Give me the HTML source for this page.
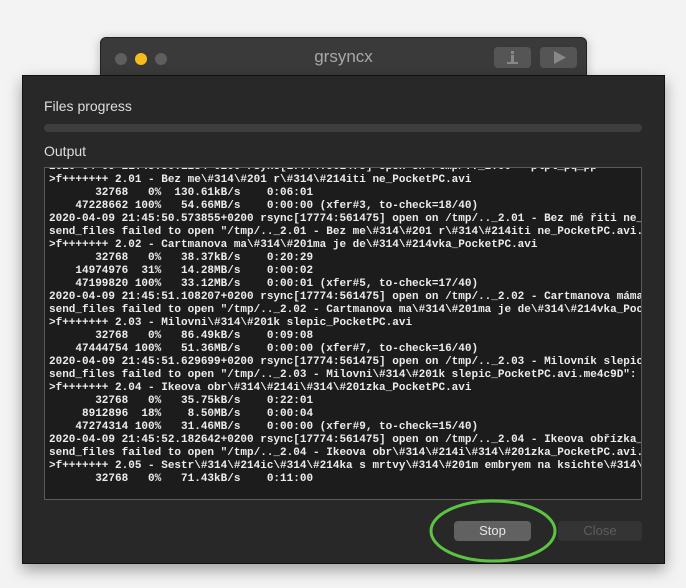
<!DOCTYPE html>
<html><head><meta charset="utf-8"><style>
body{margin:0;width:686px;height:588px;background:#f3f3f3;position:relative;overflow:hidden;font-family:"Liberation Sans",sans-serif}
.win{position:absolute;left:100px;top:37px;width:485px;height:60px;background:#3a3a3a;border:1px solid #222;border-radius:6px;box-shadow:0 2px 10px rgba(0,0,0,.25)}
.dot{position:absolute;top:15px;width:12px;height:12px;border-radius:50%;background:#5e5e5e}
.title{position:absolute;left:0;right:0;top:9px;text-align:center;color:#a8a8a8;font-size:17px}
.tb{position:absolute;top:9px;width:37px;height:21px;background:#555;border-radius:4px}
.sheet{position:absolute;left:22px;top:75px;width:641px;height:487px;background:#282828;border:1px solid #111;box-shadow:0 6px 14px rgba(0,0,0,.35)}
.lbl{position:absolute;left:21px;color:#dedede;font-size:14px}
.bar{position:absolute;left:21px;top:48px;width:598px;height:8px;background:#3e3e3e;border-radius:4px}
.out{position:absolute;left:21px;top:91px;width:596px;height:331px;background:#1c1c1c;border:1px solid #5a5a5a;overflow:hidden}
pre{margin:0;position:absolute;left:4px;top:-7px;font-family:"Liberation Mono",monospace;font-size:11px;font-weight:bold;line-height:13px;color:#ececec;white-space:pre}
.btn{position:absolute;top:445px;height:20px;border-radius:4px;text-align:center;font-size:13px;line-height:20px}
</style></head><body>
<div class="win">
<div class="dot" style="left:14px"></div><div class="dot" style="left:34px;background:#f5bd1c"></div><div class="dot" style="left:54px"></div>
<div class="title">grsyncx</div>
<div class="tb" style="left:393px"><svg width="37" height="21"><rect x="17" y="4" width="3" height="3" fill="#888"/><rect x="17" y="8" width="3" height="7" fill="#888"/><rect x="13" y="15" width="11" height="2" fill="#888"/></svg></div>
<div class="tb" style="left:439px"><svg width="37" height="21"><path d="M14 4 L26 10.5 L14 17Z" fill="#888"/></svg></div>
</div>
<div class="sheet">
<div class="lbl" style="top:22px">Files progress</div>
<div class="bar"></div>
<div class="lbl" style="top:67px">Output</div>
<div class="out"><pre>2020-04-09 21:45:50.1234+0200 rsync[17774:561475] open on /tmp/.._2.00 - plpl_pq_pp
&gt;f+++++++ 2.01 - Bez me\#314\#201 r\#314\#214iti ne_PocketPC.avi
       32768   0%  130.61kB/s    0:06:01
    47228662 100%   54.66MB/s    0:00:00 (xfer#3, to-check=18/40)
2020-04-09 21:45:50.573855+0200 rsync[17774:561475] open on /tmp/.._2.01 - Bez mé řiti ne_
send_files failed to open "/tmp/.._2.01 - Bez me\#314\#201 r\#314\#214iti ne_PocketPC.avi.
&gt;f+++++++ 2.02 - Cartmanova ma\#314\#201ma je de\#314\#214vka_PocketPC.avi
       32768   0%   38.37kB/s    0:20:29
    14974976  31%   14.28MB/s    0:00:02
    47199820 100%   33.12MB/s    0:00:01 (xfer#5, to-check=17/40)
2020-04-09 21:45:51.108207+0200 rsync[17774:561475] open on /tmp/.._2.02 - Cartmanova máma
send_files failed to open "/tmp/.._2.02 - Cartmanova ma\#314\#201ma je de\#314\#214vka_Poc
&gt;f+++++++ 2.03 - Milovni\#314\#201k slepic_PocketPC.avi
       32768   0%   86.49kB/s    0:09:08
    47444754 100%   51.36MB/s    0:00:00 (xfer#7, to-check=16/40)
2020-04-09 21:45:51.629699+0200 rsync[17774:561475] open on /tmp/.._2.03 - Milovník slepic
send_files failed to open "/tmp/.._2.03 - Milovni\#314\#201k slepic_PocketPC.avi.me4c9D":
&gt;f+++++++ 2.04 - Ikeova obr\#314\#214i\#314\#201zka_PocketPC.avi
       32768   0%   35.75kB/s    0:22:01
     8912896  18%    8.50MB/s    0:00:04
    47274314 100%   31.46MB/s    0:00:00 (xfer#9, to-check=15/40)
2020-04-09 21:45:52.182642+0200 rsync[17774:561475] open on /tmp/.._2.04 - Ikeova obřízka_
send_files failed to open "/tmp/.._2.04 - Ikeova obr\#314\#214i\#314\#201zka_PocketPC.avi.
&gt;f+++++++ 2.05 - Sestr\#314\#214ic\#314\#214ka s mrtvy\#314\#201m embryem na ksichte\#314\
       32768   0%   71.43kB/s    0:11:00</pre></div>
<div class="btn" style="left:431px;width:77px;background:#616161;color:#e6e6e6">Stop</div>
<div class="btn" style="left:535px;width:84px;background:#343434;color:#5e5e5e">Close</div>
</div>
<svg style="position:absolute;left:0;top:0" width="686" height="588"><ellipse cx="493" cy="531" rx="62" ry="30" fill="none" stroke="#5cc442" stroke-width="3"/></svg>
</body></html>
